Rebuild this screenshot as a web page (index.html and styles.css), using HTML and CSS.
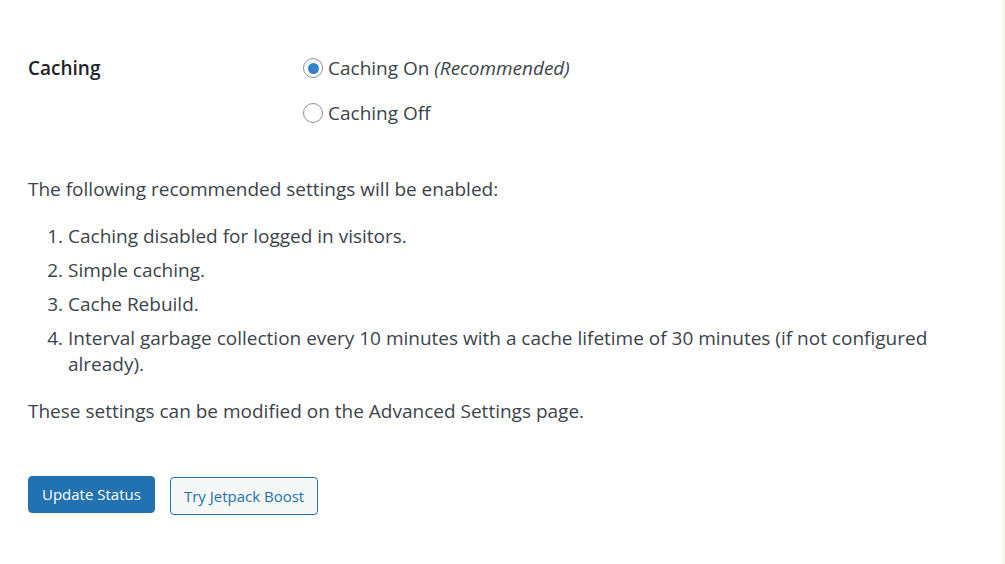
FILE: index.html
```html
<!DOCTYPE html>
<html lang="en">
<head>
    <meta charset="UTF-8">
    <meta name="viewport" content="width=device-width, initial-scale=1.0">
    <title>WP Super Cache Settings</title>
    <link rel="stylesheet" href="styles.css">
</head>
<body>
    <div class="wrap">
        <form class="cache-form">
            <div class="setting-row">
                <div class="setting-label">Caching</div>
                <div class="setting-options">
                    <label class="radio-option">
                        <input type="radio" name="wp_cache_status" value="all" checked>
                        <span>Caching On <em>(Recommended)</em></span>
                    </label>
                    <label class="radio-option">
                        <input type="radio" name="wp_cache_status" value="none">
                        <span>Caching Off</span>
                    </label>
                </div>
            </div>

            <p class="intro">The following recommended settings will be enabled:</p>
            <ol class="settings-list">
                <li>Caching disabled for logged in visitors.</li>
                <li>Simple caching.</li>
                <li>Cache Rebuild.</li>
                <li>Interval garbage collection every 10 minutes with a cache lifetime of 30 minutes (if not configured already).</li>
            </ol>
            <p class="note">These settings can be modified on the Advanced Settings page.</p>

            <div class="actions">
                <button type="button" class="button button-primary">Update Status</button>
                <button type="button" class="button button-secondary">Try Jetpack Boost</button>
            </div>
        </form>
    </div>
</body>
</html>
```

FILE: styles.css
```css
body {
    margin: 0;
    padding: 0;
    background-color: #f7f7f2;
    font-family: "Open Sans", "Noto Sans", sans-serif;
    font-size: 19px;
    color: #3c434a;
}

.wrap {
    width: 1002px;
    min-height: 564px;
    background-color: #fff;
    box-sizing: border-box;
    padding: 52px 60px 0 28px;
}

.setting-row {
    display: flex;
    align-items: flex-start;
}

.setting-label {
    width: 275px;
    font-weight: 600;
    color: #1d2327;
    line-height: 32px;
}

.setting-options {
    display: flex;
    flex-direction: column;
    gap: 13px;
}

.radio-option {
    display: flex;
    align-items: center;
    line-height: 32px;
    color: #3c434a;
}

.radio-option input {
    appearance: none;
    width: 20px;
    height: 20px;
    margin: 0 5px 0 0;
    border: 1px solid #8c8f94;
    border-radius: 50%;
    background-color: #fff;
    box-sizing: border-box;
    display: grid;
    place-items: center;
}

.radio-option input:checked::before {
    content: "";
    width: 11px;
    height: 11px;
    border-radius: 50%;
    background-color: #3582c4;
}

.intro {
    margin: 44px 0 0;
    line-height: 32px;
}

.settings-list {
    margin: 18px 0 0;
    padding-left: 40px;
}

.settings-list li {
    line-height: 26px;
    margin-bottom: 8px;
}

.note {
    margin: 18px 0 0;
    line-height: 32px;
}

.actions {
    display: flex;
    align-items: flex-start;
    gap: 15px;
    margin-top: 49px;
}

.button {
    font-family: inherit;
    font-size: 15px;
    line-height: 35px;
    padding: 0 13px;
    border-radius: 4px;
    border: 1px solid #2271b1;
    cursor: pointer;
}

.button-primary {
    background-color: #2271b1;
    color: #fff;
}

.button-secondary {
    background-color: #f6f7f7;
    color: #2271b1;
    line-height: 36px;
    margin-top: 1px;
}
```
